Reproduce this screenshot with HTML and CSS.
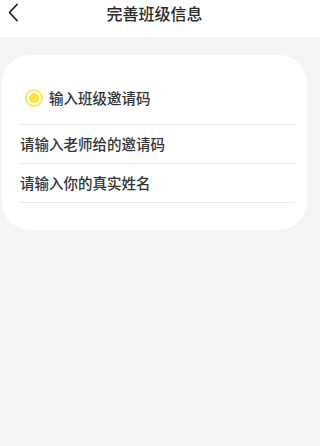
FILE: index.html
```html
<!DOCTYPE html>
<html lang="zh">
<head>
<meta charset="utf-8">
<meta name="viewport" content="width=309">
<title>完善班级信息</title>
<link rel="stylesheet" href="styles.css">
</head>
<body>
<header class="nav">
  <div class="nav-inner">
    <svg class="back" width="12" height="19" viewBox="0 0 12 19"><path d="M10 1.5 L2.5 9.5 L10 17.5" fill="none" stroke="#222" stroke-width="1.8" stroke-linecap="round" stroke-linejoin="round"/></svg>
    <h1 class="title">完善班级信息</h1>
  </div>
</header>
<main class="page">
  <section class="card">
    <div class="option">
      <span class="radio"><span class="dot"></span></span>
      <span class="option-label">输入班级邀请码</span>
    </div>
    <div class="field">请输入老师给的邀请码</div>
    <div class="field">请输入你的真实姓名</div>
  </section>
</main>
</body>
</html>
```
FILE: styles.css
```css
* { box-sizing: border-box; }
html, body {
  margin: 0;
  padding: 0;
  background: #f4f4f4;
  font-family: "Noto Sans CJK SC", "Noto Sans", sans-serif;
  color: #333;
}
.nav {
  background: #fff;
  height: 37px;
}
.nav-inner {
  position: relative;
  width: 309px;
  height: 37px;
  display: flex;
  align-items: center;
  justify-content: center;
}
.back {
  position: absolute;
  left: 7px;
  top: 3px;
}
.title {
  margin: 0 0 11px 0;
  font-size: 16px;
  font-weight: 500;
  color: #2a2a2a;
  line-height: 16px;
}
.page {
  width: 309px;
  padding: 18px 2px 0 2px;
}
.card {
  height: 175px;
  background: #fff;
  border-radius: 28px;
  padding: 0 12px 0 18px;
}
.option {
  display: flex;
  align-items: center;
  padding-top: 33px;
  height: 70px;
  padding-bottom: 17px;
  border-bottom: 1px solid #e9e9e9;
  padding-left: 5px;
}
.radio {
  width: 18px;
  height: 18px;
  border-radius: 50%;
  border: 2px solid #fbe94f;
  display: flex;
  align-items: center;
  justify-content: center;
  background: #fff;
}
.dot {
  width: 10px;
  height: 10px;
  border-radius: 50%;
  background: #fde23a;
}
.option-label {
  margin-left: 6px;
  font-size: 14.5px;
  font-weight: 500;
  color: #333;
}
.field {
  height: 39px;
  display: flex;
  align-items: center;
  font-size: 14.5px;
  font-weight: 500;
  color: #333;
  border-bottom: 1px solid #e9e9e9;
  padding-bottom: 2px;
}
```
